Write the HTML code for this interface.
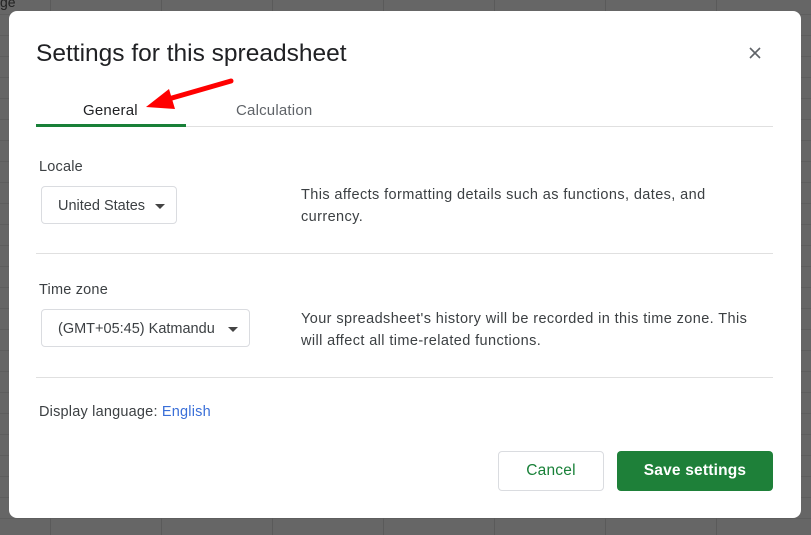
<!DOCTYPE html>
<html><head><style>
html,body{margin:0;padding:0}
body{width:811px;height:535px;overflow:hidden;position:relative;font-family:"Liberation Sans",Arial,sans-serif;
background-color:#666;
background-image:linear-gradient(to right,#5a5a5a 1px,transparent 1px),linear-gradient(to bottom,#5e5e5e 1px,transparent 1px);
background-size:111px 100%,100% 21px;background-position:50px 0,0 14px;}
.top{position:absolute;left:0;top:-6px;color:#222;font-size:14px}
.dlg{position:absolute;left:9px;top:11px;width:792px;height:507px;background:#fff;border-radius:8px}
.t{position:absolute;left:27px;top:29px;font-size:24.5px;color:#202124}
.tab{position:absolute;top:91px;font-size:15px;letter-spacing:0.2px}
.line{position:absolute;left:27px;width:737px;height:1px;background:#e0e0e0}
.lbl{position:absolute;left:30px;font-size:14.5px;color:#3c4043;letter-spacing:0.2px}
.sel{position:absolute;left:32px;height:38px;border:1px solid #dadce0;border-radius:4px;box-sizing:border-box;font-size:14.5px;color:#3c4043;padding:11px 0 0 16px}
.sel:after{content:"";position:absolute;right:11px;top:17px;border:5px solid transparent;border-top-color:#444;border-bottom:0}
.desc{position:absolute;left:292px;font-size:14.5px;color:#3c4043;line-height:22px;letter-spacing:0.4px}
.btn{position:absolute;top:440px;height:40px;border-radius:4px;box-sizing:border-box;font-size:15.5px;text-align:center;line-height:40px;letter-spacing:0.2px}
</style></head><body>
<div class="top">ge</div>
<div class="dlg">
<div class="t">Settings for this spreadsheet</div>
<svg style="position:absolute;left:740px;top:36px" width="12" height="12"><path d="M1 1L11 11M11 1L1 11" stroke="#5f6368" stroke-width="1.6"/></svg>
<div class="tab" style="left:74px;color:#202124">General</div>
<div class="tab" style="left:227px;color:#5f6368">Calculation</div>
<div class="line" style="top:115px"></div>
<div style="position:absolute;left:27px;top:113px;width:150px;height:3px;background:#188038"></div>
<div class="lbl" style="top:148px">Locale</div>
<div class="sel" style="top:175px;width:136px">United States</div>
<div class="desc" style="top:173px">This affects formatting details such as functions, dates, and<br>currency.</div>
<div class="line" style="top:242px"></div>
<div class="lbl" style="top:271px">Time zone</div>
<div class="sel" style="top:298px;width:209px">(GMT+05:45) Katmandu</div>
<div class="desc" style="top:297px">Your spreadsheet's history will be recorded in this time zone. This<br>will affect all time-related functions.</div>
<div class="line" style="top:366px"></div>
<div class="lbl" style="top:393px">Display language: <span style="color:#3a6fd8">English</span></div>
<div class="btn" style="left:489px;width:106px;border:1px solid #dadce0;line-height:38px;color:#188038">Cancel</div>
<div class="btn" style="left:608px;width:156px;background:#1e8039;color:#fff;font-weight:bold">Save settings</div>
<svg style="position:absolute;left:130px;top:64px" width="100" height="40"><line x1="92" y1="6" x2="26" y2="25" stroke="#f00" stroke-width="5" stroke-linecap="round"/><polygon points="7,32 30,14 36,34" fill="#f00"/></svg>
</div>
</body></html>
